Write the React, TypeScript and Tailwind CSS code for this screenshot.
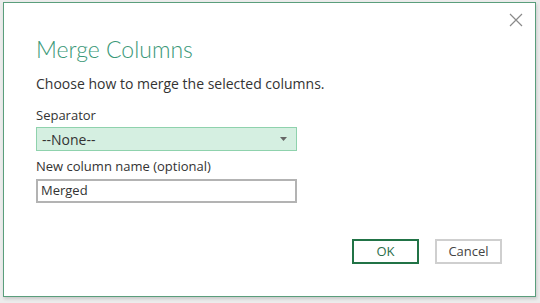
const font = { fontFamily: '"Open Sans", "Noto Sans", sans-serif' };

const App = () => {
  return (
    <div className="w-[540px] h-[303px] bg-[#ececec] overflow-hidden" style={font}>
      <div className="ml-[3px] mt-[2px] w-[533px] h-[295px] bg-white border border-[#5a9e7c] shadow-[1px_2px_3px_rgba(0,0,0,0.15)] relative">
        <button className="absolute right-[11px] top-[9px] w-[16px] h-[16px] flex items-center justify-center">
          <svg width="14" height="14" viewBox="0 0 14 14" fill="none" stroke="#8a8a8a" strokeWidth="1.2">
            <path d="M1 1L13 13M13 1L1 13" />
          </svg>
        </button>

        <div className="pl-[32px] pt-[31px]">
          <h1
            className="text-[23px] leading-[30px] font-light text-[#3a9878]"
            style={{ fontFamily: 'Lato, "Open Sans", sans-serif' }}
          >
            Merge Columns
          </h1>
          <p className="mt-[10px] text-[14px] leading-[20px] text-[#333]">
            Choose how to merge the selected columns.
          </p>

          <div className="mt-[12px] text-[13px] leading-[18px] text-[#333]">Separator</div>
          <div className="mt-[3px] w-[261px] h-[24px] bg-[#d5efe1] border border-[#8fd2ad] flex items-center justify-between pl-[5px] pr-[9px] text-[14px] text-[#333]">
            <span>--None--</span>
            <svg width="7" height="4" viewBox="0 0 7 4">
              <path d="M0 0H7L3.5 4Z" fill="#666" />
            </svg>
          </div>

          <div className="mt-[6px] text-[13px] leading-[18px] text-[#333]">New column name (optional)</div>
          <div className="mt-[4px] w-[261px] h-[24px] bg-white border-2 border-[#b3b3b3] flex items-center pl-[3px] text-[13px] text-[#333]">
            Merged
          </div>
        </div>

        <div className="absolute left-[348px] top-[236px] flex gap-[16px]">
          <button className="w-[67px] h-[25px] border-2 border-[#217346] text-[13px] text-[#2a6e4a]">OK</button>
          <button className="w-[67px] h-[25px] border-2 border-[#cfcfcf] text-[13px] text-[#444]">Cancel</button>
        </div>
      </div>
    </div>
  );
};

export default App;
